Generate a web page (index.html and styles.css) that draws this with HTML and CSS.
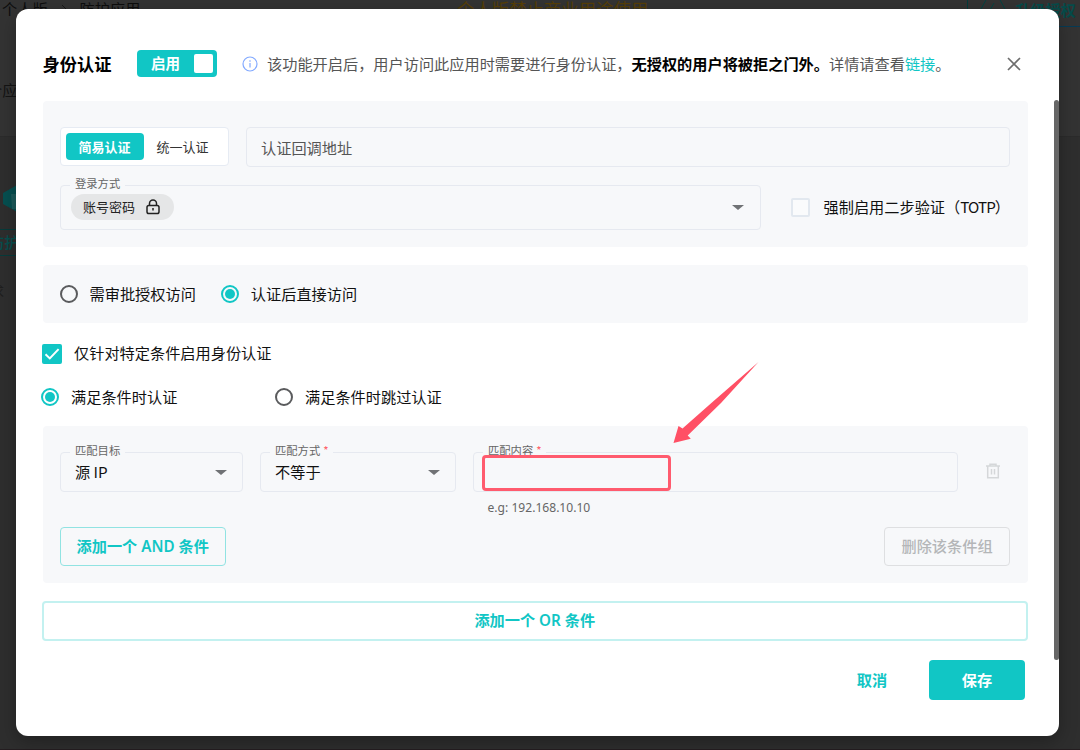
FILE: index.html
```html
<!DOCTYPE html>
<html lang="zh-CN">
<head>
<meta charset="utf-8">
<title>身份认证</title>
<link rel="stylesheet" href="styles.css">
</head>
<body>
<div class="page">
  <div class="topbar">
    <div class="crumbs"><span>个人版</span><svg width="8" height="12" viewBox="0 0 8 12"><path d="M2 2l4 4-4 4"/></svg><span>防护应用</span></div>
    <div class="notice">个人版禁止商业用途使用</div>
    <div class="upgrade"><svg width="28" height="26" viewBox="0 0 28 26"><path d="M8 1h12l6 11-6 11H8L2 12z"/><path d="M15 6l-4 7h6l-3 6"/></svg><span>升级授权</span></div>
  </div>
  <div class="bg-line"></div>
  <div class="bg-tab">个应用</div>
  <svg class="bg-logo" width="32" height="28" viewBox="0 0 32 28"><path class="hex" d="M0 8L14 0l14 8v11l-14 8L0 19z"/><path class="mark" d="M8 9h10v4h-5v11H9z"/></svg>
  <div class="bg-pill">防护</div>
  <div class="bg-word">求</div>
</div>

<div class="modal">
  <header class="head">
    <h1 class="title">身份认证</h1>
    <div class="switch"><span>启用</span><i class="knob"></i></div>
    <svg class="info" width="16" height="16" viewBox="0 0 16 16"><circle cx="8" cy="8" r="7"/><path d="M8 7v4.6M8 4.2v1.5"/></svg>
    <p class="desc">该功能开启后，用户访问此应用时需要进行身份认证，<b>无授权的用户将被拒之门外。</b>详情请查看<a>链接</a>。</p>
    <svg class="close" width="14" height="14" viewBox="0 0 14 14"><path d="M1 1l12 12M13 1L1 13"/></svg>
  </header>

  <section class="panel auth">
    <div class="row">
      <div class="segment"><span class="seg on">简易认证</span><span class="seg">统一认证</span></div>
      <div class="field callback">认证回调地址</div>
    </div>
    <div class="row login">
      <div class="field method">
        <span class="label">登录方式</span>
        <span class="chip">账号密码<svg width="16" height="16" viewBox="0 0 16 16"><rect x="2" y="6.500" width="12" height="8" rx="1.800"/><path d="M4.500 6.500V4.600a3.500 3.500 0 0 1 7 0V6.500M8 9v2.600"/></svg></span>
        <i class="caret"></i>
      </div>
      <i class="box"></i><span class="totp">强制启用二步验证（<span class="abbr">TOTP</span>）</span>
    </div>
  </section>

  <section class="panel access">
    <i class="radio"></i><span class="option">需审批授权访问</span>
    <i class="radio on second"></i><span class="option">认证后直接访问</span>
  </section>

  <div class="only">
    <svg width="20" height="20" viewBox="0 0 20 20"><rect width="20" height="20" rx="2"/><path d="M3.500 10.200l4.300 4.200 8.800-9.300"/></svg><span>仅针对特定条件启用身份认证</span>
  </div>
  <div class="when">
    <div class="choice"><i class="radio on"></i><span>满足条件时认证</span></div>
    <div class="choice"><i class="radio"></i><span>满足条件时跳过认证</span></div>
  </div>

  <section class="panel rules">
    <div class="row">
      <div class="field target"><span class="label">匹配目标</span>源 IP<i class="caret"></i></div>
      <div class="field op"><span class="label">匹配方式<em>*</em></span>不等于<i class="caret"></i></div>
      <div class="field value"><span class="label">匹配内容<em>*</em></span></div>
      <svg class="trash" width="16" height="16" viewBox="0 0 16 16"><path d="M1 3h14M5 2.400V1.200h6v1.200M2.700 3v11.700h10.600V3M6.500 6v5.500M9.500 6v5.500"/></svg>
    </div>
    <div class="hint">e.g: 192.168.10.10</div>
    <div class="actions"><button class="btn and">添加一个 AND 条件</button><button class="btn remove">删除该条件组</button></div>
  </section>

  <button class="btn or">添加一个 OR 条件</button>
  <footer class="foot"><button class="btn cancel">取消</button><button class="btn save">保存</button></footer>
  <i class="scroll"></i>
</div>

<div class="callout"></div>
<svg class="arrow" width="92" height="84" viewBox="0 0 92 84"><path d="M88.500 2L42.500 42L12.500 68.500L8.500 66L3.500 83L20.800 78.800L17.700 75.500L51 43Z"/></svg>
</body>
</html>
```
FILE: styles.css
```css
* { box-sizing: border-box; }
body {
  margin: 0; width: 1080px; height: 750px; overflow: hidden; position: relative;
  background: #2e2e2e; color: #111;
  font: 15.2px/22px "Noto Sans", "Noto Sans CJK SC", sans-serif;
}
svg { display: block; fill: none; flex: none; }
i, em { font-style: normal; }
h1, p { margin: 0; }
button { margin: 0; padding: 0; font: inherit; background: none; }

.page { position: absolute; inset: 0; background: linear-gradient(#333 0 136px, #2e2e2e 137px); border-bottom: 1px solid #241d20; overflow: hidden; }
.topbar { height: 26px; position: relative; color: #0d0d0d; }
.crumbs { display: flex; align-items: center; gap: 12px; height: 18px; padding-left: 2px; }
.crumbs svg { stroke: #181818; }
.notice { position: absolute; left: 457px; top: -2px; color: #553e08; font-size: 17.400px; }
.upgrade { position: absolute; left: 967px; top: -8px; width: 130px; height: 35px; display: flex; align-items: center; gap: 8px; padding-left: 11px; border: 1px solid #053c3c; border-bottom-color: #063b55; color: #054b4a; font-weight: 600; }
.upgrade svg { stroke: #054442; }
.bg-line { border-bottom: 1px solid #2b2b2b; height: 111px; }
.bg-tab { position: absolute; left: -13px; top: 79px; color: #141414; }
.bg-logo { position: absolute; left: 3px; top: 185px; }
.bg-logo .hex { fill: #064f50; }
.bg-logo .mark { fill: #1d5c5c; }
.bg-pill { position: absolute; left: -11px; top: 229px; width: 40px; height: 27px; line-height: 24px; border: solid #073b3b; border-width: 1px 0; color: #064f4e; font-weight: 500; }
.bg-word { position: absolute; left: -9px; top: 280px; font-size: 13px; color: #1f1f1f; }

.modal { position: absolute; left: 16px; top: 9px; width: 1043px; height: 726.500px; padding: 0 31.500px 0 26.500px; background: #fff; border-radius: 12px; box-shadow: 0 6px 18px rgba(0,0,0,.28); }
.head { height: 91.500px; padding-top: 17.500px; display: flex; align-items: center; }
.title { font-size: 17.300px; line-height: 26px; font-weight: 600; font-family: "Noto Sans CJK SC", sans-serif; color: #000; width: 94.500px; padding-top: 1px; }
.switch { width: 79.500px; height: 27px; border-radius: 4px; background: #11c6c5; color: #fff; font-weight: 600; font-size: 14.500px; line-height: 27px; display: flex; align-items: center; justify-content: space-between; padding: 0 4px 0 14px; }
.knob { width: 19px; height: 19px; background: #fff; border-radius: 2px; }
.info { margin-left: 25.500px; margin-top: 1px; stroke: #82a9ff; stroke-width: 1.2; }
.desc { margin-left: 9px; padding-top: 1px; color: #555; white-space: nowrap; }
.desc b { font-weight: 700; color: #000; }
.desc a { color: #11c6c5; }
.close { margin-left: auto; margin-right: 6.500px; stroke: #6d6d6d; stroke-width: 1.700; }

.panel { background: #f7f8fa; border-radius: 4px; padding: 0 17.500px 0 17px; }
.row { display: flex; }
.auth { height: 146.500px; padding-top: 26.500px; }
.segment { width: 169px; height: 39px; padding: 5px; display: flex; background: #fff; border: 1px solid #e6ebf3; border-radius: 4px; }
.seg { width: 78px; height: 26.500px; line-height: 28px; text-align: center; font-size: 13px; color: #333; }
.seg.on { background: #11c6c5; border-radius: 4px; color: #fff; font-weight: 700; }
.field { position: relative; flex: none; height: 40px; display: flex; align-items: center; padding: 0 0 2px 14.500px; border: 1px solid #e6e9f0; border-radius: 4px; font-family: "Noto Sans CJK SC", sans-serif; }
.callback { flex: 1; margin-left: 17px; color: #555; padding-bottom: 0; }
.login { margin-top: 17.500px; align-items: center; }
.method { width: 701px; height: 45.500px; padding: 0 0 0 10px; }
.label { position: absolute; left: 9.500px; top: -12px; padding: 0 5px; background: #f7f8fa; font-size: 11.300px; line-height: 18px; color: #666; white-space: nowrap; }
.label em { color: #ff5a64; margin-left: 3px; }
.chip { height: 26px; width: 103px; border-radius: 13px; background: #e5e6e7; display: flex; align-items: center; padding-left: 12.500px; gap: 10px; font-size: 13px; line-height: 20px; color: #222; white-space: nowrap; }
.chip svg { stroke: #222; stroke-width: 1.500; }
.caret { position: absolute; right: 15.500px; top: 50%; margin-top: -2px; border: solid transparent; border-width: 5px 6px 0; border-top-color: #707275; }
.target .caret, .op .caret { right: 14.500px; }
.box { flex: none; width: 19px; height: 19px; margin-left: 30px; border: 2px solid #e2e8ef; border-radius: 2px; background: #fafbfc; }
.totp { margin-left: 14px; padding-bottom: 2px; white-space: nowrap; font-family: "Noto Sans CJK SC", sans-serif; }
.abbr { letter-spacing: -.9px; }

.access { margin-top: 17.500px; height: 58.500px; display: flex; align-items: center; }
.radio { flex: none; width: 18px; height: 18px; border: 2px solid #5a5b5d; border-radius: 50%; display: grid; place-items: center; }
.radio.on { border-color: #11c6c5; }
.radio.on::after { content: ""; width: 10px; height: 10px; border-radius: 50%; background: #11c6c5; }
.option { margin-left: 12px; }
.second { margin-left: 25px; }
.only { height: 61px; display: flex; align-items: center; gap: 12px; margin-left: -.5px; }
.only span { padding-bottom: 1px; }
.only rect { fill: #11c6c5; }
.only path { stroke: #fff; stroke-width: 2; }
.when { height: 42px; padding-bottom: 17px; display: flex; align-items: center; margin-left: -1.500px; }
.choice { width: 234px; display: flex; align-items: center; gap: 12px; white-space: nowrap; }

.rules { height: 157px; padding-top: 26px; }
.target { width: 183px; }
.op { width: 196px; margin-left: 17px; }
.value { width: 485px; margin-left: 17px; }
.trash { margin: 11px 0 0 27px; stroke: #d5d7d9; stroke-width: 1.500; }
.hint { margin: 6px 0 0 428px; height: 20px; line-height: 20px; font-size: 12.100px; color: #666; }
.actions { margin-top: 9px; display: flex; justify-content: space-between; }
.btn { border: 1px solid transparent; border-radius: 4px; color: #11c6c5; font-weight: 500; display: block; white-space: nowrap; line-height: 20px; }
.and { width: 166.500px; height: 39px; border-color: #91e3e2; font-weight: 600; padding-bottom: 1px; }
.remove { width: 126px; height: 39px; border-color: #dedfe1; color: #b4b6b8; padding-bottom: 1px; }
.or { width: 985.500px; height: 40px; margin: 17.500px 0 0 -.5px; border: 2px solid #c3f1f0; font-weight: 600; padding-bottom: 1px; }
.foot { margin-top: 19.500px; display: flex; justify-content: flex-end; padding-right: 2.500px; gap: 27px; }
.cancel { width: 58px; height: 40px; font-weight: 600; padding-right: 2px; }
.save { width: 96px; height: 40px; background: #11c6c5; color: #fff; font-weight: 700; }
.scroll { position: absolute; right: 0; top: 91px; width: 5.500px; height: 560px; background: #666; border-radius: 3px; }

.callout { position: absolute; left: 482px; top: 455px; width: 189px; height: 35.500px; border: 3px solid #ff5b6e; border-radius: 4px; }
.arrow { position: absolute; left: 670px; top: 360px; fill: #ff5065; }
```
